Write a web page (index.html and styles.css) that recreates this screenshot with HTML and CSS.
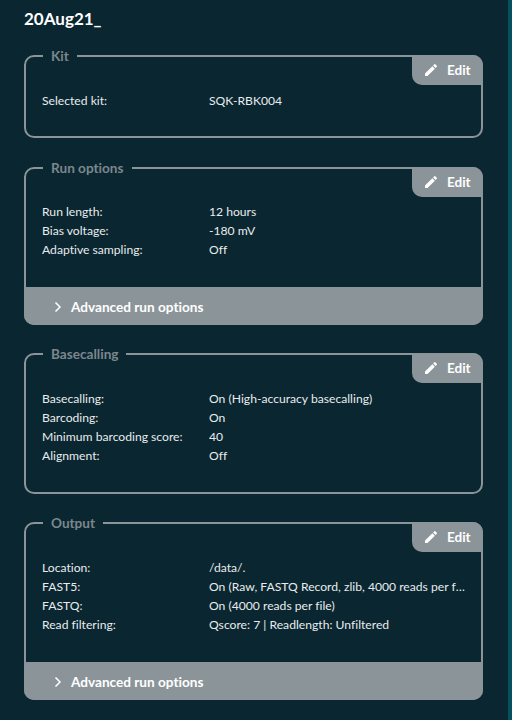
FILE: index.html
```html
<!DOCTYPE html>
<html lang="en">
<head>
    <meta charset="UTF-8">
    <title>20Aug21_</title>
    <link rel="stylesheet" href="styles.css">
</head>
<body>
    <main class="page">
        <h1 class="run-title">20Aug21_</h1>

        <section class="card card-kit">
            <h2 class="card-title">Kit</h2>
            <button class="edit-btn">
                <svg class="edit-icon" viewBox="0 0 24 24"><path d="M3 17.25V21h3.75L17.81 9.94l-3.75-3.75L3 17.25zM20.71 7.04a1 1 0 0 0 0-1.41l-2.34-2.34a1 1 0 0 0-1.41 0l-1.83 1.83 3.75 3.75 1.83-1.83z"/></svg>
                Edit
            </button>
            <dl class="rows">
                <dt>Selected kit:</dt><dd>SQK-RBK004</dd>
            </dl>
        </section>

        <section class="card card-run">
            <h2 class="card-title">Run options</h2>
            <button class="edit-btn">
                <svg class="edit-icon" viewBox="0 0 24 24"><path d="M3 17.25V21h3.75L17.81 9.94l-3.75-3.75L3 17.25zM20.71 7.04a1 1 0 0 0 0-1.41l-2.34-2.34a1 1 0 0 0-1.41 0l-1.83 1.83 3.75 3.75 1.83-1.83z"/></svg>
                Edit
            </button>
            <dl class="rows">
                <dt>Run length:</dt><dd>12 hours</dd>
                <dt>Bias voltage:</dt><dd>-180 mV</dd>
                <dt>Adaptive sampling:</dt><dd>Off</dd>
            </dl>
            <div class="advanced">
                <svg class="chevron" viewBox="0 0 10 12"><path d="M2.500 1.500 7 6l-4.500 4.500"/></svg>
                Advanced run options
            </div>
        </section>

        <section class="card card-basecalling">
            <h2 class="card-title">Basecalling</h2>
            <button class="edit-btn">
                <svg class="edit-icon" viewBox="0 0 24 24"><path d="M3 17.25V21h3.75L17.81 9.94l-3.75-3.75L3 17.25zM20.71 7.04a1 1 0 0 0 0-1.41l-2.34-2.34a1 1 0 0 0-1.41 0l-1.83 1.83 3.75 3.75 1.83-1.83z"/></svg>
                Edit
            </button>
            <dl class="rows">
                <dt>Basecalling:</dt><dd>On (High-accuracy basecalling)</dd>
                <dt>Barcoding:</dt><dd>On</dd>
                <dt>Minimum barcoding score:</dt><dd>40</dd>
                <dt>Alignment:</dt><dd>Off</dd>
            </dl>
        </section>

        <section class="card card-output">
            <h2 class="card-title">Output</h2>
            <button class="edit-btn">
                <svg class="edit-icon" viewBox="0 0 24 24"><path d="M3 17.25V21h3.75L17.81 9.94l-3.75-3.75L3 17.25zM20.71 7.04a1 1 0 0 0 0-1.41l-2.34-2.34a1 1 0 0 0-1.41 0l-1.83 1.83 3.75 3.75 1.83-1.83z"/></svg>
                Edit
            </button>
            <dl class="rows">
                <dt>Location:</dt><dd>/data/.</dd>
                <dt>FAST5:</dt><dd>On (Raw, FASTQ Record, zlib, 4000 reads per file)</dd>
                <dt>FASTQ:</dt><dd>On (4000 reads per file)</dd>
                <dt>Read filtering:</dt><dd>Qscore: 7 | Readlength: Unfiltered</dd>
            </dl>
            <div class="advanced">
                <svg class="chevron" viewBox="0 0 10 12"><path d="M2.500 1.500 7 6l-4.500 4.500"/></svg>
                Advanced run options
            </div>
        </section>
    </main>
</body>
</html>
```

FILE: styles.css
```css
html, body {
    margin: 0;
    padding: 0;
    height: 100%;
    overflow: hidden;
}
body {
    background-color: #0a2630;
    color: #e8ecee;
    font-family: Lato, sans-serif;
    font-size: 12.15px;
    font-variant-ligatures: none;
    border-right: 4px solid #07505f;
    box-sizing: border-box;
}
.page {
    padding: 8px 25px 0 24px;
}
.run-title {
    margin: 0 0 26px;
    height: 21px;
    line-height: 21px;
    font-size: 17px;
    font-weight: 700;
    color: #ffffff;
}
.card {
    position: relative;
    display: flex;
    flex-direction: column;
    box-sizing: border-box;
    margin-bottom: 28px;
    border: 2px solid #8b9599;
    border-radius: 10px;
}
.card-kit { height: 83px; margin-bottom: 29px; }
.card-run { height: 158px; }
.card-basecalling { height: 141px; }
.card-output { height: 178px; }
/* title sits on the top border */
.card-title {
    position: absolute;
    top: -10px;
    left: 17px;
    margin: 0;
    padding: 0 8px;
    background-color: #0a2630;
    color: #7b878d;
    font-size: 13.6px;
    font-weight: 700;
    line-height: 18px;
}
.edit-btn {
    position: absolute;
    top: -2px;
    right: -2px;
    display: flex;
    align-items: center;
    gap: 8px;
    width: 71px;
    height: 30px;
    padding: 0 0 0 11px;
    border: none;
    border-radius: 0 10px 0 10px;
    background-color: #8b9599;
    color: #ffffff;
    font-family: Lato, sans-serif;
    font-size: 13.5px;
    font-weight: 700;
}
.edit-icon {
    width: 16px;
    height: 16px;
    fill: #ffffff;
}
.rows {
    display: grid;
    grid-template-columns: 167px 1fr;
    grid-auto-rows: 19px;
    align-items: center;
    margin: 0;
    padding: 34px 14px 0 16px;
    line-height: 19px;
}
.card-run .rows {
    padding-top: 33px;
}
.rows dt, .rows dd {
    margin: 0;
    white-space: nowrap;
    overflow: hidden;
    text-overflow: ellipsis;
}
.advanced {
    display: flex;
    align-items: center;
    gap: 8px;
    box-sizing: border-box;
    margin: auto -2px -2px;
    height: 38px;
    padding: 2px 0 0 29px;
    border-radius: 0 0 10px 10px;
    background-color: #8b9599;
    color: #ffffff;
    font-size: 13.6px;
    font-weight: 700;
}
.chevron {
    width: 10px;
    height: 12px;
    fill: none;
    stroke: #ffffff;
    stroke-width: 1.5;
}
```
